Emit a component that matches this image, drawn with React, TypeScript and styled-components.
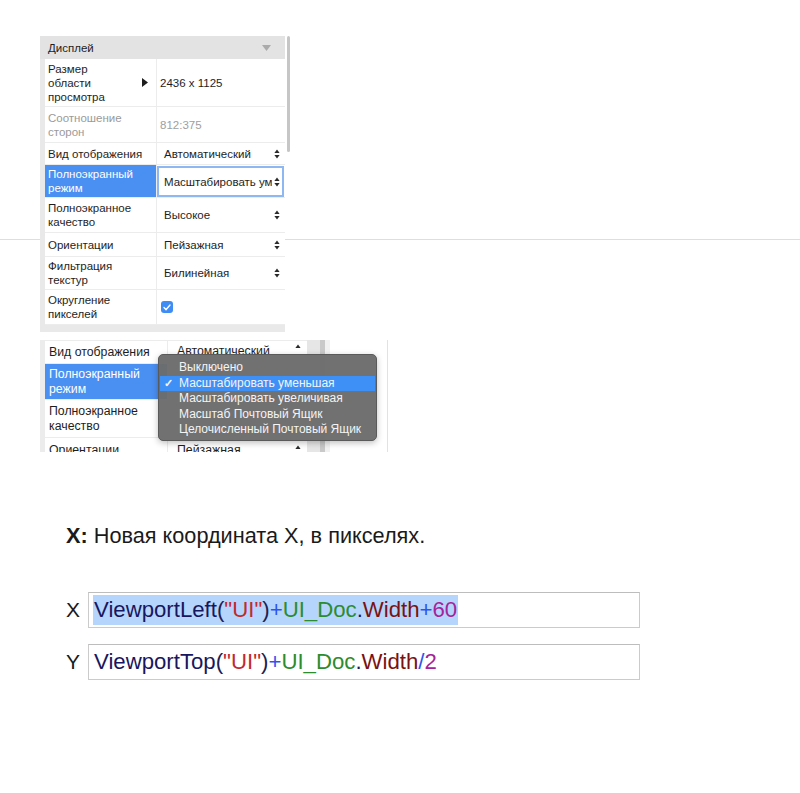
import styled, { createGlobalStyle } from 'styled-components';

const GlobalStyle = createGlobalStyle`
  html, body {
    margin: 0;
    padding: 0;
    background: #ffffff;
  }
  body {
    font-family: "Liberation Sans", Arial, Helvetica, sans-serif;
    color: #1d1d1f;
  }
`;

const Page = styled.main`
  width: 800px;
  min-height: 793px;
  display: flex;
  flex-direction: column;
`;

// the thin rule that runs behind the first screenshot
const TopBand = styled.section`
  padding: 36px 0 0 40px;
  background: linear-gradient(#dedede, #dedede) 0 239px / 100% 1px no-repeat;
`;

const Inspector = styled.div`
  display: flex;
  width: 250px;
  font-size: 11.5px;
  line-height: 14px;
`;

const InspectorFrame = styled.div`
  width: 245px;
  background: #e9e9e9;
  padding-bottom: 7px;
`;

const InspectorHeader = styled.div`
  height: 23px;
  display: flex;
  align-items: center;
  justify-content: space-between;
  padding: 0 14px 0 8px;
  color: #1e1e1e;
  font-size: 11.5px;
  background: #e3e3e3;
`;

const Rows = styled.div`
  margin-left: 5px;
  background: #ffffff;
`;

const PropRow = styled.div<{ $h: number }>`
  display: grid;
  grid-template-columns: 111px 1px 127px;
  height: ${(p) => p.$h}px;
  border-bottom: 1px solid #ececec;
  box-sizing: border-box;
  &::before {
    content: '';
    grid-column: 2;
    grid-row: 1;
    background: #ececec;
  }
`;

const NameCell = styled.div<{ $selected?: boolean; $muted?: boolean }>`
  grid-column: 1;
  grid-row: 1;
  display: flex;
  align-items: center;
  justify-content: space-between;
  padding: 0 8px 0 3px;
  background: ${(p) => (p.$selected ? '#4a8ff2' : '#ffffff')};
  color: ${(p) => (p.$selected ? '#ffffff' : p.$muted ? '#9a9a9a' : '#1e1e1e')};
`;

const ValueCell = styled.div<{ $muted?: boolean; $focused?: boolean }>`
  grid-column: 3;
  grid-row: 1;
  min-width: 0;
  display: flex;
  align-items: center;
  justify-content: space-between;
  gap: 2px;
  padding: 0 4px 0 3px;
  color: ${(p) => (p.$muted ? '#a0a0a0' : '#1e1e1e')};
  box-sizing: border-box;
  overflow: hidden;
  white-space: nowrap;
  svg {
    flex-shrink: 0;
  }
  ${(p) =>
    p.$focused &&
    `
    border: 2px solid #8fb8f2;
    margin: 1px 0 0 0;
    padding: 0 2px 0 5px;
  `}
`;

const SelectText = styled.span<{ $indent?: number }>`
  min-width: 0;
  flex: 1;
  padding-left: ${(p) => p.$indent ?? 4}px;
  overflow: hidden;
  white-space: nowrap;
  text-overflow: clip;
`;

const Scrollbar = styled.div`
  width: 5px;
  display: flex;
  justify-content: center;
  &::before {
    content: '';
    width: 3px;
    height: 116px;
    margin-left: 1px;
    border-radius: 2px;
    background: #c6c6c6;
  }
`;

const Checkbox = styled.span`
  width: 12px;
  height: 12px;
  margin-left: 1px;
  border-radius: 3px;
  background: #3f8cf5;
  display: inline-flex;
  align-items: center;
  justify-content: center;
`;

const Arrows = ({ color = '#2a2a2a', upOnly = false }: { color?: string; upOnly?: boolean }) => (
  <svg width="6" height="10" viewBox="0 0 6 10">
    <path d="M3 0.5 L5.6 4 L0.4 4 Z" fill={color} />
    {!upOnly && <path d="M3 9.5 L5.6 6 L0.4 6 Z" fill={color} />}
  </svg>
);

// second screenshot, cropped, with the open pop-up menu
const Snapshot = styled.div`
  position: relative;
  margin: 8px 0 0 40px;
  width: 348px;
  height: 112px;
  overflow: hidden;
  display: flex;
  font-size: 12.3px;
  line-height: 15px;
  border-right: 1px solid #e2e2e2;
  box-sizing: border-box;
`;

const SnapFrame = styled.div`
  width: 267px;
  padding: 1px 0 0 5px;
  box-sizing: border-box;
  background: #ececec;
`;

const SnapRow = styled.div<{ $h: number }>`
  display: grid;
  grid-template-columns: 122px 1px 139px;
  height: ${(p) => p.$h}px;
  margin-bottom: 1px;
  background: #ffffff;
  &::before {
    content: '';
    grid-column: 2;
    grid-row: 1;
    background: #ececec;
  }
`;

const SnapName = styled.div<{ $selected?: boolean }>`
  grid-column: 1;
  grid-row: 1;
  display: flex;
  align-items: center;
  padding-left: 4px;
  background: ${(p) => (p.$selected ? '#4a8ff2' : '#ffffff')};
  color: ${(p) => (p.$selected ? '#ffffff' : '#1e1e1e')};
`;

const SnapValue = styled.div<{ $top?: boolean }>`
  grid-column: 3;
  grid-row: 1;
  display: flex;
  align-items: ${(p) => (p.$top ? 'flex-start' : 'center')};
  justify-content: space-between;
  padding: ${(p) => (p.$top ? '3px 6px 0 9px' : '0 6px 0 9px')};
  color: #1e1e1e;
`;

const SnapGutter = styled.div`
  width: 23px;
  display: flex;
  background: linear-gradient(
    to right,
    #e6e6e6 0 13px,
    #c9c9c9 13px 18px,
    #f1f1f1 18px 23px
  );
`;

const Menu = styled.div`
  position: absolute;
  left: 118px;
  top: 14px;
  width: 219px;
  height: 87px;
  box-sizing: border-box;
  padding: 5px 1px;
  border-radius: 5px;
  background: rgba(108, 108, 108, 0.97);
  border: 1px solid #5a5a5a;
  box-shadow: 0 2px 6px rgba(0, 0, 0, 0.25);
  color: #f2f2f2;
  font-size: 12px;
`;

const MenuItem = styled.div<{ $active?: boolean }>`
  height: 15.5px;
  display: flex;
  align-items: center;
  padding-left: 4px;
  background: ${(p) => (p.$active ? '#3f90f6' : 'transparent')};
  color: #f4f4f4;
  white-space: nowrap;
`;

const Tick = styled.span`
  width: 15px;
  font-size: 11px;
  font-weight: 700;
`;

const Description = styled.p`
  margin: 72px 0 0 66px;
  font-size: 21.7px;
  line-height: 24px;
  color: #1a1a1a;
  b {
    font-weight: 700;
  }
`;

const Fields = styled.div`
  margin: 44px 0 0 66px;
  display: flex;
  flex-direction: column;
  gap: 16px;
`;

const FieldRow = styled.div`
  display: flex;
  align-items: center;
`;

const FieldLabel = styled.span`
  width: 22px;
  font-size: 21px;
  color: #1a1a1a;
`;

const FieldBox = styled.div`
  width: 552px;
  height: 36px;
  box-sizing: border-box;
  border: 1px solid #cbcbcb;
  border-top-color: #bdbdbd;
  padding: 0 4px;
  display: flex;
  align-items: center;
  font-size: 22.2px;
  white-space: nowrap;
`;

const Selected = styled.span`
  background: #b5d5fd;
  padding: 2px 1px;
`;

const Plain = styled.span`
  padding-left: 1px;
`;

const Tok = styled.span<{ $c: string }>`
  color: ${(p) => p.$c};
`;

const C = {
  fn: '#17175f',
  paren: '#202050',
  str: '#c22a2f',
  op: '#2b55ee',
  ident: '#2d8c2d',
  dot: '#17175f',
  prop: '#7a1214',
  num: '#a4239b',
};

const rows = [
  { name: 'Размер\nобласти\nпросмотра', h: 48, value: '2436 x 1125', arrow: true },
  { name: 'Соотношение\nсторон', h: 36, value: '812:375', muted: true },
  { name: 'Вид отображения', h: 22, select: 'Автоматический' },
  { name: 'Полноэкранный\nрежим', h: 33, select: 'Масштабировать уменьшая', selected: true },
  { name: 'Полноэкранное\nкачество', h: 35, select: 'Высокое' },
  { name: 'Ориентации', h: 24, select: 'Пейзажная' },
  { name: 'Фильтрация\nтекстур', h: 33, select: 'Билинейная' },
  { name: 'Округление\nпикселей', h: 35, check: true },
];

const menuItems = [
  'Выключено',
  'Масштабировать уменьшая',
  'Масштабировать увеличивая',
  'Масштаб Почтовый Ящик',
  'Целочисленный Почтовый Ящик',
];

const Lines = ({ text }: { text: string }) => (
  <span>
    {text.split('\n').map((l, i) => (
      <span key={i} style={{ display: 'block' }}>
        {l}
      </span>
    ))}
  </span>
);

const Expr = ({ fn, tail }: { fn: string; tail: [string, string] }) => (
  <>
    <Tok $c={C.fn}>{fn}</Tok>
    <Tok $c={C.paren}>(</Tok>
    <Tok $c={C.str}>"UI"</Tok>
    <Tok $c={C.paren}>)</Tok>
    <Tok $c={C.op}>+</Tok>
    <Tok $c={C.ident}>UI_Doc</Tok>
    <Tok $c={C.dot}>.</Tok>
    <Tok $c={C.prop}>Width</Tok>
    <Tok $c={C.op}>{tail[0]}</Tok>
    <Tok $c={C.num}>{tail[1]}</Tok>
  </>
);

const App = () => {
  return (
    <Page>
      <GlobalStyle />
      <TopBand>
        <Inspector>
          <InspectorFrame>
            <InspectorHeader>
              Дисплей
              <svg width="9" height="6" viewBox="0 0 9 6">
                <path d="M0 0 H9 L4.5 6 Z" fill="#ababab" />
              </svg>
            </InspectorHeader>
            <Rows>
              {rows.map((r) => (
                <PropRow key={r.name} $h={r.h}>
                  <NameCell $selected={r.selected} $muted={r.muted}>
                    <Lines text={r.name} />
                    {r.arrow && (
                      <svg width="6" height="9" viewBox="0 0 6 9">
                        <path d="M0 0 L6 4.5 L0 9 Z" fill="#1e1e1e" />
                      </svg>
                    )}
                  </NameCell>
                  {r.value && <ValueCell $muted={r.muted}>{r.value}</ValueCell>}
                  {r.select && (
                    <ValueCell $focused={r.selected}>
                      <SelectText $indent={r.selected ? 0 : 4}>{r.select}</SelectText>
                      <Arrows />
                    </ValueCell>
                  )}
                  {r.check && (
                    <ValueCell>
                      <Checkbox>
                        <svg width="8" height="7" viewBox="0 0 8 7">
                          <path
                            d="M1 3.6 L3 5.6 L7 1"
                            stroke="#ffffff"
                            strokeWidth="1.4"
                            fill="none"
                            strokeLinecap="round"
                          />
                        </svg>
                      </Checkbox>
                    </ValueCell>
                  )}
                </PropRow>
              ))}
            </Rows>
          </InspectorFrame>
          <Scrollbar />
        </Inspector>
      </TopBand>

      <Snapshot>
        <SnapFrame>
          <SnapRow $h={22}>
            <SnapName>Вид отображения</SnapName>
            <SnapValue $top>
              Автоматический
              <Arrows upOnly />
            </SnapValue>
          </SnapRow>
          <SnapRow $h={35}>
            <SnapName $selected>
              <Lines text={'Полноэкранный\nрежим'} />
            </SnapName>
            <SnapValue />
          </SnapRow>
          <SnapRow $h={37}>
            <SnapName>
              <Lines text={'Полноэкранное\nкачество'} />
            </SnapName>
            <SnapValue />
          </SnapRow>
          <SnapRow $h={24}>
            <SnapName>Ориентации</SnapName>
            <SnapValue>
              Пейзажная
              <Arrows upOnly />
            </SnapValue>
          </SnapRow>
        </SnapFrame>
        <SnapGutter />
        <Menu>
          {menuItems.map((m, i) => (
            <MenuItem key={m} $active={i === 1}>
              <Tick>{i === 1 ? '✓' : ''}</Tick>
              {m}
            </MenuItem>
          ))}
        </Menu>
      </Snapshot>

      <Description>
        <b>X:</b> Новая координата X, в пикселях.
      </Description>

      <Fields>
        <FieldRow>
          <FieldLabel>X</FieldLabel>
          <FieldBox>
            <Selected>
              <Expr fn="ViewportLeft" tail={['+', '60']} />
            </Selected>
          </FieldBox>
        </FieldRow>
        <FieldRow>
          <FieldLabel>Y</FieldLabel>
          <FieldBox>
            <Plain>
              <Expr fn="ViewportTop" tail={['/', '2']} />
            </Plain>
          </FieldBox>
        </FieldRow>
      </Fields>
    </Page>
  );
};

export default App;
